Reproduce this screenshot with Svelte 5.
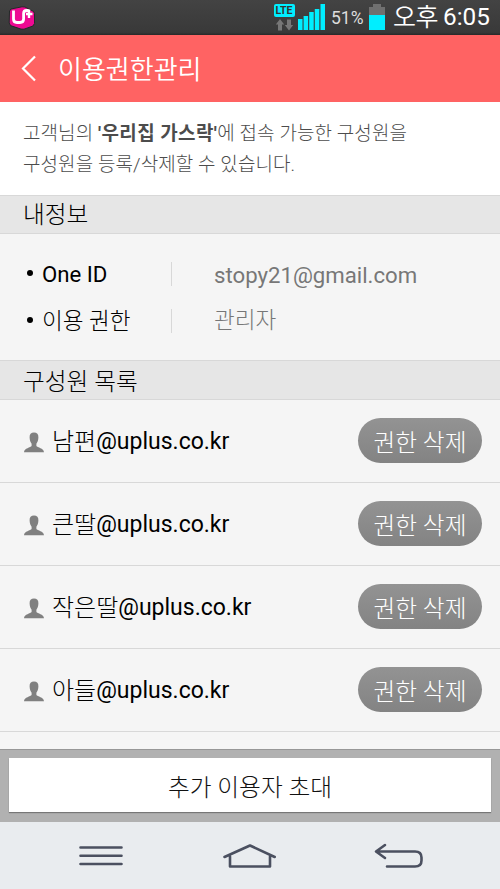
<script lang="ts">
  type Member = { name: string; domain: string };

  const members: Member[] = [
    { name: '남편', domain: '@uplus.co.kr' },
    { name: '큰딸', domain: '@uplus.co.kr' },
    { name: '작은딸', domain: '@uplus.co.kr' },
    { name: '아들', domain: '@uplus.co.kr' }
  ];
</script>

<div class="screen">
  <div class="status-bar">
    <svg class="carrier" width="28" height="24" viewBox="0 0 28 24">
      <path d="M1.5 5 3 3 14 .8l3 .2 8.500 4.400 1 2v10l-1.500 2.600-9 3.200-3-.1L2.500 19.600 1.200 17z" fill="#ed0a92" stroke="#222b28" stroke-width="1" />
      <path d="M5.500 4.500v8.500q0 3.500 3.500 3.500h3q3.600 0 3.600-3.500V7.500q0-3 3-3h2" fill="none" stroke="#fff" stroke-width="2.800" />
      <path d="M21 3.500v8.500M18 8h6.500" fill="none" stroke="#fff" stroke-width="2.400" />
    </svg>
    <div class="lte">
      <span class="lte-label">LTE</span>
      <svg width="18" height="12" viewBox="0 0 18 12">
        <path d="M5 0 9.200 5.500H7V11.500H3V5.500H.8zM14 11.500 9.800 6H12V.5h4V6h2.200z" fill="#777" />
      </svg>
    </div>
    <svg class="signal" width="27" height="26" viewBox="0 0 27 26">
      <path d="M0 15h4.500v11H0zM5.600 12h4.500v14H5.600zM11.200 8h4.500v18h-4.500zM16.800 5h4.500v21h-4.500zM22.500 0H27v26h-4.500z" fill="#00eeff" />
    </svg>
    <span class="percent">51%</span>
    <svg class="battery" width="16" height="26" viewBox="0 0 16 26">
      <path d="M4 0h8v3h4v8H0V3h4z" fill="#707070" />
      <path d="M0 11h16v15H0z" fill="#00eeff" />
    </svg>
    <span class="ampm">오후</span>
    <span class="clock">6:05</span>
  </div>

  <header>
    <svg width="16" height="27" viewBox="0 0 16 27">
      <path d="M14 1.500 2 13.500l12 12" fill="none" stroke="#fff" stroke-width="2.200" />
    </svg>
    <h1>이용권한관리</h1>
  </header>

  <p class="intro">
    고객님의 <b>'우리집 가스락'</b>에 접속 가능한 구성원을<br />
    <span>구성원을 등록/삭제할 수 있습니다.</span>
  </p>

  <h2>내정보</h2>
  <dl>
    <div class="info-row">
      <dt>One ID</dt>
      <dd class="email">stopy21@gmail.com</dd>
    </div>
    <div class="info-row">
      <dt><span class="hangul">이용 권한</span></dt>
      <dd class="hangul role">관리자</dd>
    </div>
  </dl>

  <h2 class="members-title">구성원 목록</h2>
  <ul>
    {#each members as member}
      <li>
        <svg width="20" height="21" viewBox="0 0 20 21">
          <path d="M10 0.500c3 0 4.600 1.800 4.400 5-.1 3-1 4.900-2 6.200v2.400c1 1.700 7.400 2 7.600 6.100H0c.2-4.100 6.600-4.400 7.600-6.100v-2.400c-1-1.300-1.900-3.200-2-6.200C5.400 2.300 7 .5 10 .5z" fill="#808080" />
        </svg>
        <span class="name">{member.name}</span><span class="domain">{member.domain}</span>
        <button class="remove">권한 삭제</button>
      </li>
    {/each}
  </ul>

  <div class="invite-bar">
    <button class="invite">추가 이용자 초대</button>
  </div>

  <nav>
    <svg width="44" height="20" viewBox="0 0 44 20">
      <path d="M1.500 1.500h41M1.500 9.700h41M1.500 18h41" />
    </svg>
    <svg width="54" height="26" viewBox="0 0 54 26">
      <path d="M2.500 14 28 2.500 52.700 14M8 13.500v10h40v-10" />
    </svg>
    <svg width="50" height="26" viewBox="0 0 50 26">
      <path d="M11 2 2 8.500l9 6.500M2.500 8.500h38.500q6.500 0 6.500 6v3q0 6-6.500 6H13" />
    </svg>
  </nav>
</div>

<style>
  :global(body) {
    background: #f5f5f5;
  }
  .screen {
    width: 500px;
    height: 889px;
    overflow: hidden;
    display: flex;
    flex-direction: column;
    font-family: Roboto, 'Noto Sans CJK KR', sans-serif;
    font-weight: 300;
    color: #000;
    background: #f5f5f5;
  }
  h1,
  h2,
  p,
  dl,
  dt,
  dd,
  ul {
    margin: 0;
    padding: 0;
    font-weight: 300;
  }
  svg {
    display: block;
    flex: none;
  }
  button {
    border: none;
    padding: 0;
    font: inherit;
  }

  .status-bar {
    box-sizing: border-box;
    height: 35px;
    flex: none;
    display: flex;
    align-items: flex-start;
    padding: 4px 0 0 8px;
    background: linear-gradient(#434343, #393939 92%, #292929);
    color: #fff;
    white-space: nowrap;
  }
  .carrier {
    margin-top: 2px;
  }
  .lte {
    margin-left: 237px;
    width: 22px;
    display: flex;
    flex-direction: column;
    align-items: center;
    gap: 2px;
  }
  .lte-label {
    width: 21px;
    height: 13px;
    border-radius: 2px;
    background: #00eeff;
    color: #333;
    font: 700 10.5px/14px Roboto, sans-serif;
    text-align: center;
  }
  .signal {
    margin-left: 3px;
  }
  .percent {
    margin: 4px 0 0 6px;
    width: 38px;
    font-size: 17.5px;
    line-height: 20px;
    font-weight: 400;
    color: #ddd;
  }
  .ampm {
    margin: 0 0 0 8px;
    width: 50px;
    font-size: 25px;
    line-height: 28px;
    font-weight: 350;
    letter-spacing: -0.5px;
  }
  .clock {
    font-size: 24.3px;
    line-height: 26px;
    font-weight: 400;
  }

  header {
    height: 67px;
    flex: none;
    display: flex;
    align-items: center;
    padding-left: 21px;
    gap: 21px;
    background: #ff6363;
    color: #fff;
  }
  h1 {
    padding-top: 3px;
    font-size: 26px;
    line-height: 40px;
    font-weight: 350;
  }

  .intro {
    box-sizing: border-box;
    height: 93px;
    flex: none;
    padding: 16px 0 0 23px;
    background: #fff;
    color: #4c4c4c;
    font-size: 19px;
    line-height: 31px;
    letter-spacing: 0.08px;
    white-space: nowrap;
  }
  .intro b {
    font-weight: 700;
    letter-spacing: 0.4px;
  }

  h2 {
    box-sizing: border-box;
    height: 39px;
    flex: none;
    padding-left: 23px;
    border-top: 1px solid #d8d8d8;
    border-bottom: 1px solid #d8d8d8;
    background: #e6e6e6;
    font-size: 23.7px;
    line-height: 39px;
  }
  .members-title {
    height: 40px;
    line-height: 42px;
  }

  dl {
    box-sizing: border-box;
    height: 126px;
    flex: none;
    padding-top: 16px;
  }
  .info-row {
    height: 47px;
    display: flex;
    align-items: center;
    font-size: 22.4px;
    font-weight: 400;
  }
  dt {
    width: 144px;
    height: 24px;
    line-height: 28px;
    display: flex;
    align-items: center;
    margin-left: 27px;
    border-right: 1px solid #d8d8d8;
    font-size: 22.2px;
    font-weight: 400;
    padding-top: 0;
  }
  dt .hangul {
    padding-top: 3px;
  }
  dt::before {
    content: '';
    width: 6px;
    height: 6px;
    margin: -1px 9px 0 0;
    border-radius: 50%;
    background: #000;
  }
  dd {
    margin-left: 42px;
    color: #777;
  }
  .email {
    padding-top: 2px;
    font-size: 22.2px;
    font-weight: 400;
  }
  .hangul {
    font-size: 22.6px;
    font-weight: 300;
  }
  .role {
    margin-top: -4px;
  }

  ul {
    height: 349px;
    flex: none;
    list-style: none;
  }
  li {
    box-sizing: border-box;
    height: 83px;
    display: flex;
    align-items: center;
    padding: 0 18px 0 24px;
    border-bottom: 1px solid #d8d8d8;
    line-height: 42px;
  }
  li svg {
    margin-top: 2px;
  }
  .name {
    padding-top: 2px;
    margin-left: 8px;
    font-size: 24px;
  }
  .domain {
    padding-top: 2px;
    font-size: 23px;
    font-weight: 400;
  }
  .remove {
    width: 124px;
    height: 45px;
    margin: -1px 0 0 auto;
    border-radius: 23px;
    background: linear-gradient(#939393, #838383);
    color: #fff;
    font-size: 23.7px;
    line-height: 50px;
  }

  .invite-bar {
    box-sizing: border-box;
    height: 73px;
    flex: none;
    padding: 8px 9px 0;
    border-top: 1px solid #979797;
    background: #b1b1b1;
  }
  .invite {
    width: 482px;
    height: 54px;
    display: block;
    background: #fff;
    box-shadow: 0 1px 1px #777;
    color: #111;
    font-size: 23.7px;
    line-height: 60px;
  }

  nav {
    height: 67px;
    flex: none;
    display: flex;
    align-items: center;
    justify-content: space-between;
    padding: 0 76px 0 79px;
    background: #e9ecef;
  }
  nav path {
    fill: none;
    stroke: #4b5060;
    stroke-width: 2.6;
    stroke-linecap: round;
    stroke-linejoin: round;
  }
</style>
